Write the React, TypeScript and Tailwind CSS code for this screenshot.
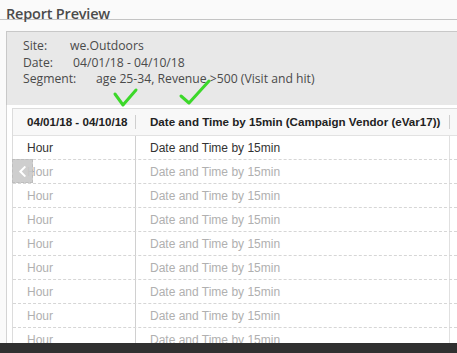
import { FaChevronLeft } from "react-icons/fa";

const rows = Array.from({ length: 9 }, (_, i) => i);

export default function App() {
  return (
    <div className="relative w-[457px] h-[353px] overflow-hidden bg-[#fafafa] flex flex-col">
      <div className="pl-[6px] pt-[1px] h-[20px] border-b border-[#c4c4c4]">
        <span className="font-['Open_Sans',sans-serif] text-[14.5px] font-semibold text-[#4b4b4b] leading-[18px] tracking-[-0.2px]">
          Report Preview
        </span>
      </div>

      <div className="ml-[6px] mt-[11px] h-[74px] bg-[#e8e8e8] border-t border-l border-[#c8c8c8] pl-[16px] pt-[6px] font-['Open_Sans',sans-serif] text-[12.2px] text-[#4a4a4a] leading-[16.5px]">
        <div className="flex">
          <span className="w-[47px]">Site:</span>
          <span>we.Outdoors</span>
        </div>
        <div className="flex">
          <span className="w-[50px]">Date:</span>
          <span>04/01/18 - 04/10/18</span>
        </div>
        <div className="flex">
          <span className="w-[73px]">Segment:</span>
          <span>age 25-34, Revenue &gt;500 (Visit and hit)</span>
        </div>
      </div>

      <div className="ml-[6px] flex-1 border-l border-[#d4d4d4] bg-white pl-[5px] pt-[3px] font-['Liberation_Sans',Arial,sans-serif]">
        <div className="border-l border-t border-[#dcdcdc]">
          <div className="flex h-[27px] items-center bg-[#f8f8f8] border-b border-[#e2e2e2] text-[11.6px] font-bold text-[#222]">
            <div className="w-[123px] pl-[14px] flex items-center justify-between">
              <span>04/01/18 - 04/10/18</span>
              <span className="w-px h-[14px] bg-[#cfcfcf]" />
            </div>
            <div className="w-[314px] pl-[14px] flex items-center justify-between">
              <span>Date and Time by 15min (Campaign Vendor (eVar17))</span>
              <span className="w-px h-[14px] bg-[#cfcfcf]" />
            </div>
          </div>
          {rows.map((i) => (
            <div
              key={i}
              className={`flex h-[24px] items-center border-b border-dashed border-[#d6d6d6] text-[12px] ${
                i === 0 ? "text-[#333]" : "text-[#b0b0b0]"
              }`}
            >
              <div className="w-[123px] h-full pl-[14px] flex items-center border-r border-[#d0d0d0]">Hour</div>
              <div className="w-[314px] h-full pl-[14px] flex items-center border-r border-[#e0e0e0]">
                Date and Time by 15min
              </div>
            </div>
          ))}
        </div>
      </div>

      <div className="absolute left-[12px] top-[159px] w-[21px] h-[24px] bg-[#c9c9c9]/90 border border-dashed border-[#bdbdbd] flex items-center justify-center text-white">
        <FaChevronLeft size={13} />
      </div>

      <svg className="absolute left-0 top-0" width="457" height="353">
        <polyline points="115,94 123,105 136,90" fill="none" stroke="#3cd82a" strokeWidth="3" strokeLinecap="round" strokeLinejoin="round" />
        <polyline points="181,96 189,103 209,81" fill="none" stroke="#3cd82a" strokeWidth="3" strokeLinecap="round" strokeLinejoin="round" />
      </svg>

      <div className="absolute left-0 bottom-0 w-full h-[10px] bg-[#303030]" />
    </div>
  );
}
